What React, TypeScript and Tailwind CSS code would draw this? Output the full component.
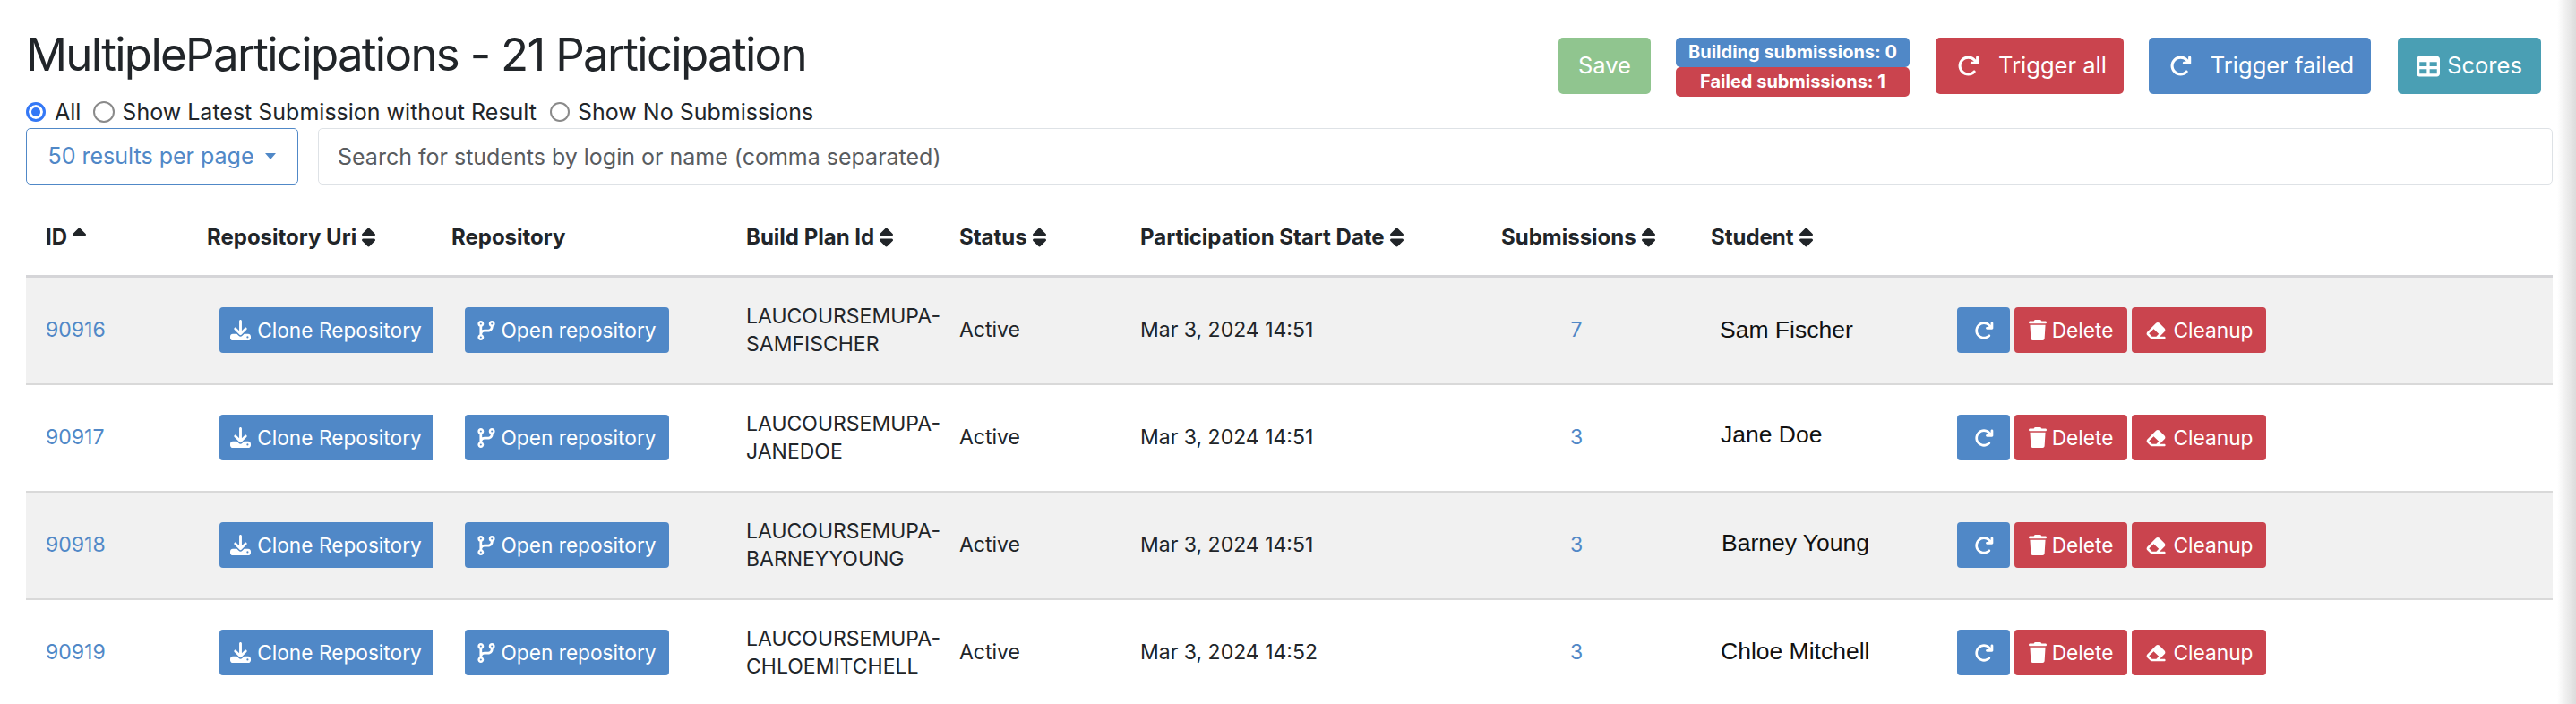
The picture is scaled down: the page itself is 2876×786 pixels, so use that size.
import { FaSort, FaSortUp, FaDownload, FaCodeBranch, FaArrowRotateRight, FaTrash, FaEraser, FaTable } from 'react-icons/fa6';

// student names sit a little off centre in the reference, so each row keeps its own nudge
const rows = [
  { id: 90916, plan: 'SAMFISCHER', date: 'Mar 3, 2024 14:51', subs: 7, name: 'Sam Fischer', nudge: 'pl-[32px] pb-[0px]' },
  { id: 90917, plan: 'JANEDOE', date: 'Mar 3, 2024 14:51', subs: 3, name: 'Jane Doe', nudge: 'pl-[33px] pb-[6px]' },
  { id: 90918, plan: 'BARNEYYOUNG', date: 'Mar 3, 2024 14:51', subs: 3, name: 'Barney Young', nudge: 'pl-[34px] pb-[4px]' },
  { id: 90919, plan: 'CHLOEMITCHELL', date: 'Mar 3, 2024 14:52', subs: 3, name: 'Chloe Mitchell', nudge: 'pl-[33px] pb-[2px]' },
];

function Th({ label, w, sort = 'both' }: { label: string; w: string; sort?: 'both' | 'up' | 'none' }) {
  return (
    <th className={`${w} pl-[22px] pt-[28px] pb-[26px] text-left font-bold text-[24px] leading-[33px] text-[#212529] align-top`}>
      <span className="inline-flex items-center gap-[6px] whitespace-nowrap">
        {label}
        {sort === 'both' && <FaSort className="w-[15px] h-[24px]" />}
        {sort === 'up' && <FaSortUp className="w-[15px] h-[24px]" />}
      </span>
    </th>
  );
}

export default function App() {
  return (
    <div className="flex w-[2876px] h-[786px] overflow-hidden bg-white font-['Inter',sans-serif] text-[#212529]">
      <div className="flex-1 min-w-0 pl-[29px]">
        {/* Header */}
        <div className="flex justify-between items-start pt-[30px] h-[110px]">
          <h2 className="text-[51px] leading-[61px] font-normal tracking-[-1.7px]">MultipleParticipations - 21 Participation</h2>
          <div className="flex items-start pt-[12px] pr-[13px]">
            <button className="h-[63px] w-[103px] rounded-[5px] bg-[#90c58f] text-white text-[25.5px]">Save</button>
            <div className="ml-[28px] w-[261px] flex flex-col text-white text-[20px] font-bold text-center leading-[33px]">
              <span className="h-[33px] rounded-[5px] bg-[#5088c7]">Building submissions: 0</span>
              <span className="h-[33px] rounded-[5px] bg-[#ca444e]">Failed submissions: 1</span>
            </div>
            <button className="ml-[29px] h-[63px] w-[210px] rounded-[5px] bg-[#ca444e] text-white text-[25.5px] flex items-center justify-center gap-[21px] pl-[5px]">
              <FaArrowRotateRight className="w-[25px] h-[25px]" />Trigger all
            </button>
            <button className="ml-[28px] h-[63px] w-[248px] rounded-[5px] bg-[#5088c7] text-white text-[25.5px] flex items-center justify-center gap-[21px] pl-[4px]">
              <FaArrowRotateRight className="w-[25px] h-[25px]" />Trigger failed
            </button>
            <button className="ml-[30px] h-[63px] w-[160px] rounded-[5px] bg-[#4a9fb4] text-white text-[25.5px] flex items-center justify-center gap-[8px]">
              <FaTable className="w-[26px] h-[26px]" />Scores
            </button>
          </div>
        </div>

        {/* Filter radios */}
        <div className="flex items-center h-[30px] mb-[3px] text-[25px] leading-[30px]">
          <label className="flex items-center gap-[10px]">
            <input type="radio" name="filter" defaultChecked className="appearance-none w-[22px] h-[22px] rounded-full border-[3px] border-[#3478f6] checked:bg-[#3478f6] checked:[box-shadow:inset_0_0_0_3px_white]" />
            All
          </label>
          <label className="flex items-center gap-[8px] ml-[14px]">
            <input type="radio" name="filter" className="appearance-none w-[24px] h-[24px] rounded-full border-2 border-[#8a8a8a]" />
            Show Latest Submission without Result
          </label>
          <label className="flex items-center gap-[9px] ml-[15px]">
            <input type="radio" name="filter" className="appearance-none w-[22px] h-[22px] rounded-full border-2 border-[#8a8a8a]" />
            Show No Submissions
          </label>
        </div>

        {/* Page size and search */}
        <div className="flex gap-[22px] h-[63px]">
          <button className="w-[304px] h-full flex items-center justify-center gap-[13px] rounded-[5px] border border-[#5088c7] text-[#5088c7] text-[25px]">
            50 results per page
            <span className="w-0 h-0 border-x-[6.5px] border-x-transparent border-t-[7px] border-t-[#5088c7]" />
          </button>
          <input
            className="flex-1 min-w-0 h-full rounded-[5px] border border-[#dee2e6] px-[21px] text-[25px] outline-none placeholder:text-[#595c5f]"
            placeholder="Search for students by login or name (comma separated)"
          />
        </div>

        {/* Participations */}
        <table className="mt-[14px] w-full table-fixed border-collapse text-[23px] leading-[31px]">
          <thead>
            <tr className="border-b-[3px] border-[#d5d5d8]">
              <Th label="ID" w="w-[180px]" sort="up" />
              <Th label="Repository Uri" w="w-[273px]" />
              <Th label="Repository" w="w-[329px]" sort="none" />
              <Th label="Build Plan Id" w="w-[238px]" />
              <Th label="Status" w="w-[202px]" />
              <Th label="Participation Start Date" w="w-[403px]" />
              <Th label="Submissions" w="w-[234px]" />
              <Th label="Student" w="w-[275px]" />
              <th />
            </tr>
          </thead>
          <tbody>
            {rows.map((row, i) => (
              <tr key={row.id} className={`h-[120px] border-b-[2px] border-[#d9d9d9] ${i % 2 === 0 ? 'bg-[#f1f1f1]' : 'bg-white'}`}>
                <td className="pl-[22px] text-[#5088c7]">{row.id}</td>
                <td className="pl-[36px]">
                  <button className="h-[51px] w-[238px] rounded-l-[4px] bg-[#5088c7] text-white text-[22.7px] flex items-center justify-center gap-[7px]">
                    <FaDownload className="w-[23px] h-[23px]" />Clone Repository
                  </button>
                </td>
                <td className="pl-[37px]">
                  <button className="h-[51px] w-[228px] rounded-[4px] bg-[#5088c7] text-white text-[22.7px] flex items-center justify-center gap-[6px]">
                    <FaCodeBranch className="w-[20px] h-[22px]" />Open repository
                  </button>
                </td>
                <td className="pl-[22px]">LAUCOURSEMUPA-<br />{row.plan}</td>
                <td className="pl-[22px]">Active</td>
                <td className="pl-[22px]">{row.date}</td>
                <td className="text-center text-[#5088c7] pr-[22px]">{row.subs}</td>
                <td className={`${row.nudge} font-['Liberation_Sans',sans-serif] text-[26.5px] text-[#111]`}>{row.name}</td>
                <td className="pl-[22px]">
                  <div className="flex gap-[5px]">
                    <button className="h-[51px] w-[59px] rounded-[4px] bg-[#5088c7] text-white flex items-center justify-center">
                      <FaArrowRotateRight className="w-[22px] h-[22px]" />
                    </button>
                    <button className="h-[51px] w-[126px] rounded-[4px] bg-[#ca444e] text-white text-[22.7px] flex items-center justify-center gap-[6px]">
                      <FaTrash className="w-[20px] h-[23px]" />Delete
                    </button>
                    <button className="h-[51px] w-[150px] rounded-[4px] bg-[#ca444e] text-white text-[22.7px] flex items-center justify-center gap-[8px]">
                      <FaEraser className="w-[24px] h-[24px]" />Cleanup
                    </button>
                  </div>
                </td>
              </tr>
            ))}
          </tbody>
        </table>
      </div>
      {/* shaded strip along the window edge */}
      <div className="w-[26px] shrink-0 bg-gradient-to-r from-white from-20% to-[#dcdcdc]" />
    </div>
  );
}
